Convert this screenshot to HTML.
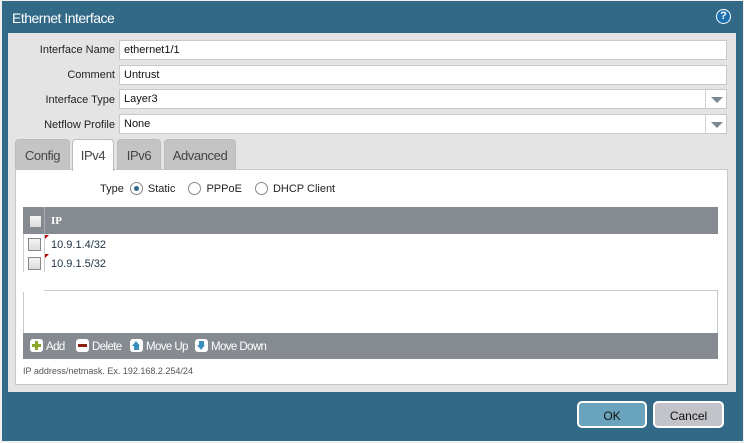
<!DOCTYPE html>
<html><head><style>
*{box-sizing:border-box;margin:0;padding:0}
body{width:744px;height:443px;background:#f0f0f0;font-family:"Liberation Sans",sans-serif;font-size:11px;color:#222;position:relative;overflow:hidden}
.abs{position:absolute}
.frame{left:2px;top:1px;width:741px;height:440px;background:#316987}
.title{left:12px;top:10px;color:#fff;font-size:14px;letter-spacing:-0.5px}
.panel{left:8px;top:33px;width:728px;height:359px;background:#e4e4e4}
.lbl{width:106px;text-align:right;left:9px;color:#222;font-size:11px}
.inp{left:119px;width:608px;height:20px;background:#fff;border:1px solid #c8c8c8;padding:3px 4px;font-size:11px;color:#111}
.dd{position:absolute;right:0;top:0;width:21px;height:18px;border-left:1px solid #d0d0d0}
.dd:after{content:"";position:absolute;left:5px;top:7px;border-left:6px solid transparent;border-right:6px solid transparent;border-top:6px solid #7d8790}
.tab{top:139px;height:31px;background:#c4c4c4;border:1px solid #bcbcbc;border-bottom:none;border-radius:4px 4px 0 0;font-size:13px;color:#444;text-align:center;padding-top:8px;letter-spacing:-0.4px}
.content{left:15px;top:169px;width:713px;height:216px;background:#fff;border:1px solid #c8c8c8}
.radio{display:inline-block;width:13px;height:13px;border:1px solid #888;border-radius:50%;vertical-align:-3px;margin:0 5px 0 6px;background:#fff;position:relative}
.cb{position:absolute;width:13px;height:13px;border:1px solid #888;background:linear-gradient(#f4f4f4,#ddd)}
.tool{color:#fff;font-size:11.5px;top:339px;letter-spacing:-0.6px}
.ic{display:inline-block;width:13px;height:13px;border-radius:3px;background:#fff;vertical-align:-2px;margin-right:3px;position:relative}
.btn{top:401px;height:27px;border:2px solid #fff;border-radius:5px;text-align:center;padding-top:6px;font-size:12px;color:#111}
</style></head><body>
<div class="abs frame"></div>
<div class="abs title">Ethernet Interface</div>
<div class="abs" style="left:716px;top:9px;width:15px;height:15px;border-radius:50%;background:#1f70b0;border:1.5px solid #fff;color:#fff;font-size:11px;font-weight:bold;text-align:center;line-height:12px">?</div>
<div class="abs panel"></div>
<div class="abs lbl" style="top:44px">Interface Name</div>
<div class="abs inp" style="top:40px">ethernet1/1</div>
<div class="abs lbl" style="top:69px">Comment</div>
<div class="abs inp" style="top:65px">Untrust</div>
<div class="abs lbl" style="top:94px">Interface Type</div>
<div class="abs inp" style="top:89px">Layer3<span class="dd"></span></div>
<div class="abs lbl" style="top:119px">Netflow Profile</div>
<div class="abs inp" style="top:114px">None<span class="dd"></span></div>
<div class="abs content"></div>
<div class="abs tab" style="left:15px;width:55px">Config</div>
<div class="abs tab" style="left:72px;width:42px;background:#fff;height:32px">IPv4</div>
<div class="abs tab" style="left:117px;width:44px">IPv6</div>
<div class="abs tab" style="left:164px;width:72px">Advanced</div>
<div class="abs" style="left:100px;top:182px;font-size:11px">Type<span class="radio"><span style="position:absolute;left:3px;top:3px;width:5px;height:5px;border-radius:50%;background:#2f6a8c"></span></span>Static <span class="radio" style="margin-left:10px"></span>PPPoE <span class="radio" style="margin-left:10px"></span>DHCP Client</div>
<div class="abs" style="left:23px;top:207px;width:695px;height:27px;background:#868b91"></div>
<div class="abs" style="left:44px;top:207px;width:1px;height:27px;background:#a8acb0"></div>
<div class="cb" style="left:29px;top:215px"></div>
<div class="abs" style="left:51px;top:215px;color:#fff;font-weight:bold;font-family:'Liberation Serif',serif;font-size:11px">IP</div>
<div class="abs" style="left:44px;top:234px;width:1px;height:38px;background:#ccc"></div>
<div class="abs" style="left:23px;top:234px;width:1px;height:38px;background:#ccc"></div>
<div class="cb" style="left:28px;top:238px"></div>
<div class="cb" style="left:28px;top:257px"></div>
<div class="abs" style="left:45px;top:235px;border-top:4px solid #b00;border-right:4px solid transparent"></div>
<div class="abs" style="left:45px;top:254px;border-top:4px solid #b00;border-right:4px solid transparent"></div>
<div class="abs" style="left:51px;top:239px;color:#234;font-size:11px">10.9.1.4/32</div>
<div class="abs" style="left:51px;top:258px;color:#234;font-size:11px">10.9.1.5/32</div>
<div class="abs" style="left:23px;top:290px;width:695px;height:69px;border:1px solid #c5cbd0;border-bottom:none"></div>
<div class="abs" style="left:22px;top:288px;width:22px;height:4px;background:#fff"></div>
<div class="abs" style="left:23px;top:333px;width:695px;height:26px;background:#868b91"></div>
<div class="abs tool" style="left:30px"><span class="ic"><span style="position:absolute;left:2px;top:5px;width:9px;height:3px;background:#8aa62a"></span><span style="position:absolute;left:5px;top:2px;width:3px;height:9px;background:#8aa62a"></span></span>Add</div>
<div class="abs tool" style="left:76px"><span class="ic"><span style="position:absolute;left:2px;top:5px;width:9px;height:3px;background:#8a2010"></span></span>Delete</div>
<div class="abs tool" style="left:130px"><span class="ic"><span style="position:absolute;left:2px;top:2px;border-left:4.5px solid transparent;border-right:4.5px solid transparent;border-bottom:5px solid #3a8fc0"></span><span style="position:absolute;left:4px;top:7px;width:5px;height:4px;background:#3a8fc0"></span></span>Move Up</div>
<div class="abs tool" style="left:195px"><span class="ic"><span style="position:absolute;left:4px;top:2px;width:5px;height:4px;background:#3a8fc0"></span><span style="position:absolute;left:2px;top:6px;border-left:4.5px solid transparent;border-right:4.5px solid transparent;border-top:5px solid #3a8fc0"></span></span>Move Down</div>
<div class="abs" style="left:23px;top:366px;font-size:9px;color:#555">IP address/netmask. Ex. 192.168.2.254/24</div>
<div class="abs btn" style="left:577px;width:70px;background:#6aa3bc">OK</div>
<div class="abs btn" style="left:653px;width:71px;background:#c3c4ca">Cancel</div>
</body></html>
